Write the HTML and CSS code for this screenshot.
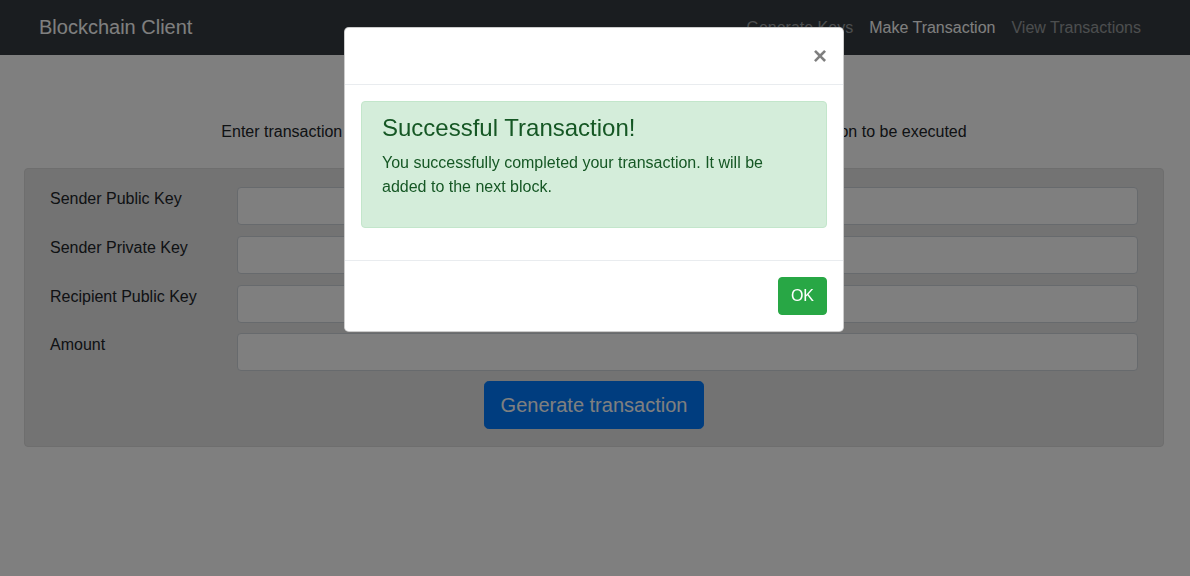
FILE: index.html
```html
<!DOCTYPE html>
<html lang="en">
<head>
<meta charset="utf-8">
<title>Blockchain Client</title>
<link rel="stylesheet" href="styles.css">
</head>
<body>
<nav class="navbar">
  <div class="nav-container">
    <a class="brand" href="#">Blockchain Client</a>
    <ul class="nav-links">
      <li><a class="nav-link" href="#">Generate Keys</a></li>
      <li><a class="nav-link active" href="#">Make Transaction</a></li>
      <li><a class="nav-link" href="#">View Transactions</a></li>
    </ul>
  </div>
</nav>

<main class="container">
  <p class="intro">Enter transaction details and click on Generate Transaction button to generate transaction to be executed</p>
  <form class="well">
    <div class="form-grid">
      <label class="form-label">Sender Public Key</label>
      <input class="form-control" type="text">
      <label class="form-label">Sender Private Key</label>
      <input class="form-control" type="text">
      <label class="form-label">Recipient Public Key</label>
      <input class="form-control" type="text">
      <label class="form-label">Amount</label>
      <input class="form-control" type="text">
    </div>
    <div class="actions">
      <button type="button" class="btn btn-primary btn-lg">Generate transaction</button>
    </div>
  </form>
</main>

<div class="modal-backdrop"></div>
<div class="modal">
  <div class="modal-dialog">
    <div class="modal-content">
      <div class="modal-header">
        <button type="button" class="close" aria-label="Close">&times;</button>
      </div>
      <div class="modal-body">
        <div class="alert">
          <h4 class="alert-heading">Successful Transaction!</h4>
          <p>You successfully completed your transaction. It will be added to the next block.</p>
        </div>
      </div>
      <div class="modal-footer">
        <button type="button" class="btn btn-success">OK</button>
      </div>
    </div>
  </div>
</div>
</body>
</html>
```

FILE: styles.css
```css
* { box-sizing: border-box; }

html, body {
  margin: 0;
  padding: 0;
}

body {
  font-family: "Liberation Sans", Arial, sans-serif;
  font-size: 16px;
  line-height: 1.5;
  color: #212529;
  background: #fff;
  min-height: 576px;
}

a { text-decoration: none; }

.navbar {
  background: #343a40;
  padding: 7px 16px 8px;
}

.nav-container {
  max-width: 1140px;
  margin: 0 auto;
  padding: 0 16px 0 15px;
  display: flex;
  align-items: center;
  justify-content: space-between;
}

.brand {
  color: #fff;
  font-size: 20px;
  line-height: 30px;
  padding: 5px 0;
  margin-left: -1px;
}

.nav-links {
  list-style: none;
  margin: 0;
  padding: 0;
  display: flex;
}

.nav-link {
  display: block;
  padding: 9px 8px 7px;
  color: rgba(255, 255, 255, 0.5);
}

.nav-link.active { color: #fff; }

.container {
  width: 1140px;
  margin: 0 auto 0 24px;
}

.intro {
  margin: 0;
  padding-top: 65px;
  text-align: center;
  line-height: 24px;
}

.well {
  margin-top: 24px;
  background: #e6e6e6;
  border: 1px solid #dcdcdc;
  border-radius: 4px;
  padding: 18px 25px 17px;
}

.form-grid {
  display: grid;
  grid-template-columns: 157px 1fr;
  column-gap: 30px;
  row-gap: 10.8px;
  align-items: start;
}

.form-label {
  line-height: 24px;
}

.form-control {
  display: block;
  width: 100%;
  height: 38px;
  padding: 6px 12px;
  font: inherit;
  background: #fff;
  border: 1px solid #ced4da;
  border-radius: 4px;
}

.actions {
  display: flex;
  justify-content: center;
  margin-top: 9.5px;
}

.btn {
  font-family: inherit;
  border: 1px solid transparent;
  border-radius: 4px;
  color: #fff;
  cursor: pointer;
  font-size: 16px;
  line-height: 24px;
  padding: 6px 12px;
}

.btn-lg {
  font-size: 20px;
  line-height: 30px;
  padding: 8px 16px;
  border-radius: 4.8px;
}

.btn-primary { background: #007bff; border-color: #007bff; }
.btn-success { background: #28a745; border-color: #28a745; }

.modal-backdrop {
  position: fixed;
  inset: 0;
  background: rgba(0, 0, 0, 0.5);
}

.modal {
  position: fixed;
  inset: 0;
}

.modal-dialog {
  width: 500px;
  margin: 27px 0 0 344px;
}

.modal-content {
  background: #fff;
  border: 1px solid rgba(0, 0, 0, 0.2);
  border-radius: 4.8px;
}

.modal-header {
  display: flex;
  justify-content: flex-end;
  padding: 16px;
  border-bottom: 1px solid #e9ecef;
}

.close {
  font-family: inherit;
  font-size: 24px;
  font-weight: 700;
  line-height: 1;
  color: #000;
  opacity: 0.5;
  text-shadow: 0 1px 0 #fff;
  background: transparent;
  border: 0;
  padding: 16px;
  margin: -16px -16px -16px auto;
  cursor: pointer;
}

.modal-body {
  padding: 16px;
}

.alert {
  background: #d4edda;
  border: 1px solid #c3e6cb;
  color: #155724;
  border-radius: 4px;
  padding: 12px 20px;
  margin-bottom: 16px;
}

.alert-heading {
  margin: 0 0 8px;
  font-size: 24px;
  font-weight: 500;
  line-height: 1.2;
}

.alert p {
  margin: 0 0 16px;
}

.modal-footer {
  display: flex;
  justify-content: flex-end;
  padding: 16px;
  border-top: 1px solid #e9ecef;
}
```
